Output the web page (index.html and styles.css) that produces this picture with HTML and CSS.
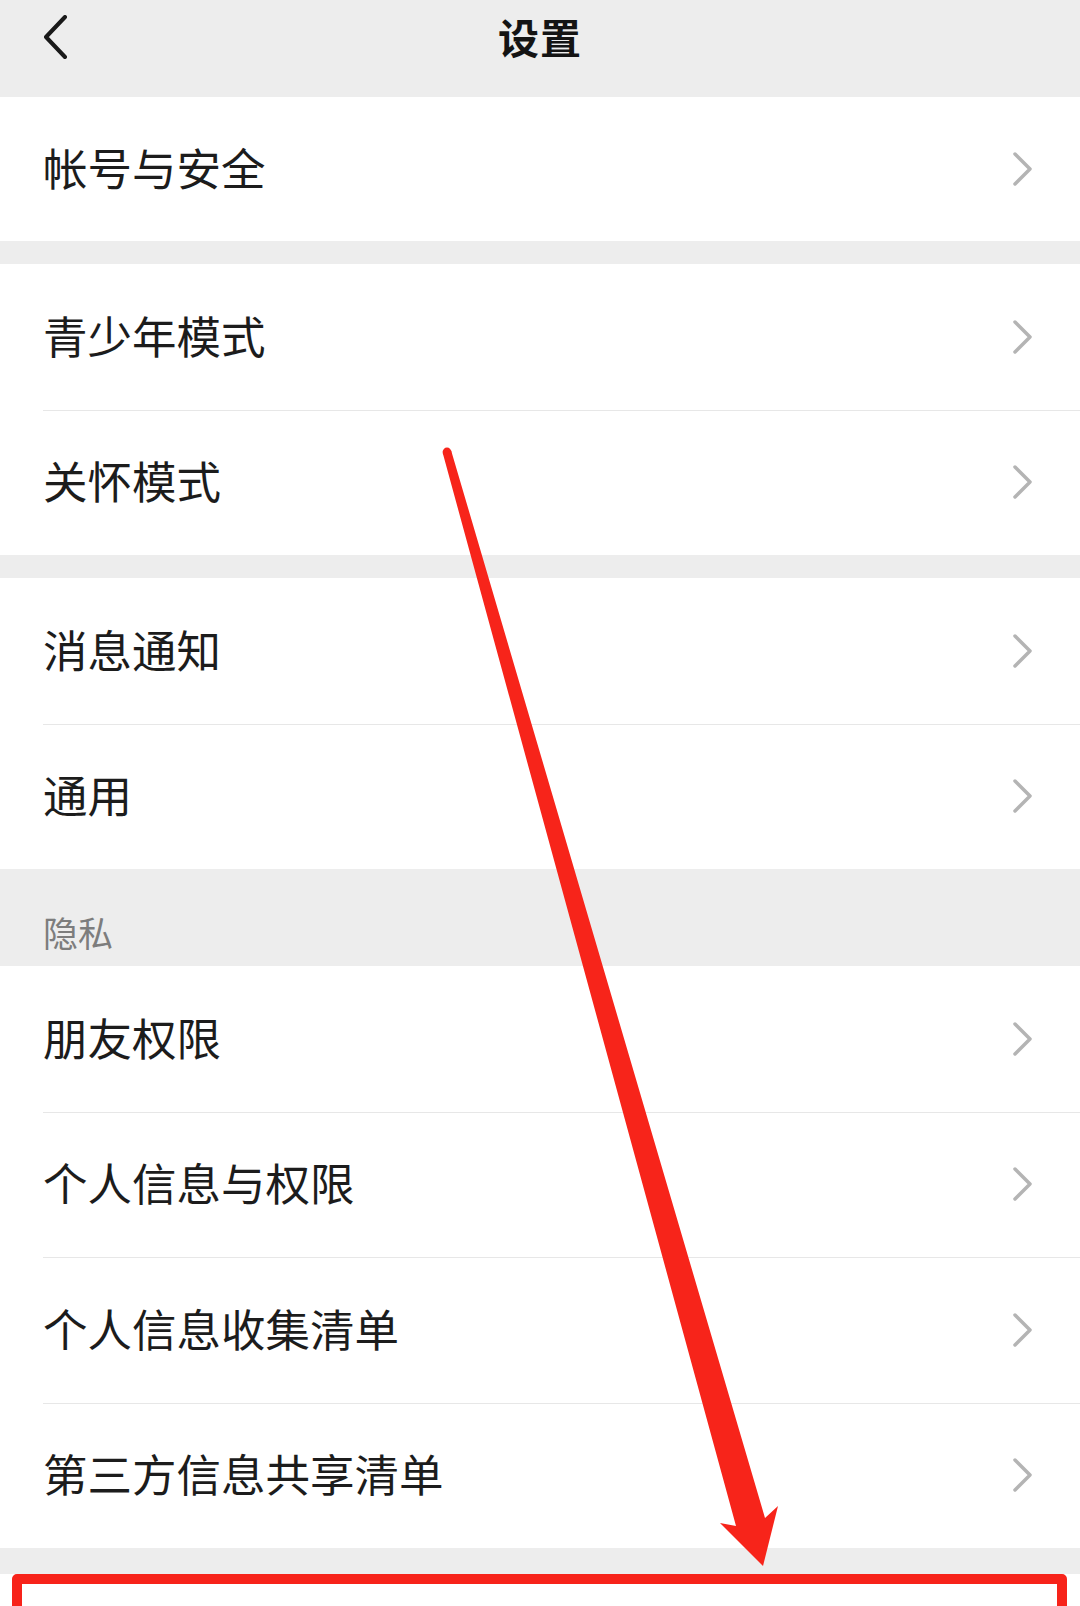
FILE: index.html
```html
<!DOCTYPE html>
<html lang="zh-CN">
<head>
<meta charset="utf-8">
<title>设置</title>
<link rel="stylesheet" href="styles.css">
</head>
<body>
<div class="page">
  <header class="topbar">
    <div class="back">
      <svg width="26" height="44" viewBox="0 0 26 44"><polyline points="22,2 3,22 22,42" fill="none" stroke="#191919" stroke-width="4" stroke-linecap="round" stroke-linejoin="round"/></svg>
    </div>
    <h1 class="title">设置</h1>
    <div></div>
  </header>

  <section class="group">
    <div class="row row-first"><span class="label">帐号与安全</span><svg class="chev" width="22" height="36" viewBox="0 0 22 36"><polyline points="3,3 18,18 3,33" fill="none" stroke="#b4b4b4" stroke-width="3.5" stroke-linecap="round" stroke-linejoin="round"/></svg></div>
  </section>

  <section class="group">
    <div class="row"><span class="label">青少年模式</span><svg class="chev" width="22" height="36" viewBox="0 0 22 36"><polyline points="3,3 18,18 3,33" fill="none" stroke="#b4b4b4" stroke-width="3.5" stroke-linecap="round" stroke-linejoin="round"/></svg></div>
    <div class="row sep"><span class="label">关怀模式</span><svg class="chev" width="22" height="36" viewBox="0 0 22 36"><polyline points="3,3 18,18 3,33" fill="none" stroke="#b4b4b4" stroke-width="3.5" stroke-linecap="round" stroke-linejoin="round"/></svg></div>
  </section>

  <section class="group">
    <div class="row"><span class="label">消息通知</span><svg class="chev" width="22" height="36" viewBox="0 0 22 36"><polyline points="3,3 18,18 3,33" fill="none" stroke="#b4b4b4" stroke-width="3.5" stroke-linecap="round" stroke-linejoin="round"/></svg></div>
    <div class="row sep"><span class="label">通用</span><svg class="chev" width="22" height="36" viewBox="0 0 22 36"><polyline points="3,3 18,18 3,33" fill="none" stroke="#b4b4b4" stroke-width="3.5" stroke-linecap="round" stroke-linejoin="round"/></svg></div>
  </section>

  <div class="section-title">隐私</div>
  <section class="group group-tight">
    <div class="row"><span class="label">朋友权限</span><svg class="chev" width="22" height="36" viewBox="0 0 22 36"><polyline points="3,3 18,18 3,33" fill="none" stroke="#b4b4b4" stroke-width="3.5" stroke-linecap="round" stroke-linejoin="round"/></svg></div>
    <div class="row sep"><span class="label">个人信息与权限</span><svg class="chev" width="22" height="36" viewBox="0 0 22 36"><polyline points="3,3 18,18 3,33" fill="none" stroke="#b4b4b4" stroke-width="3.5" stroke-linecap="round" stroke-linejoin="round"/></svg></div>
    <div class="row sep"><span class="label">个人信息收集清单</span><svg class="chev" width="22" height="36" viewBox="0 0 22 36"><polyline points="3,3 18,18 3,33" fill="none" stroke="#b4b4b4" stroke-width="3.5" stroke-linecap="round" stroke-linejoin="round"/></svg></div>
    <div class="row sep"><span class="label">第三方信息共享清单</span><svg class="chev" width="22" height="36" viewBox="0 0 22 36"><polyline points="3,3 18,18 3,33" fill="none" stroke="#b4b4b4" stroke-width="3.5" stroke-linecap="round" stroke-linejoin="round"/></svg></div>
  </section>

  <section class="group group-last">
    <div class="highlight"></div>
  </section>

  <svg class="arrow" width="1080" height="1606" viewBox="0 0 1080 1606">
    <circle cx="447" cy="452" r="4.4" fill="#f7241a"/>
    <polygon fill="#f7241a" points="442.8,453.3 451.2,450.7 765,1518 778,1506 763,1566 720,1523 736,1526"/>
  </svg>
</div>
</body>
</html>
```
FILE: styles.css
```css
html, body {
  margin: 0;
  padding: 0;
  background: #ededed;
}
.page {
  position: relative;
  width: 1080px;
  height: 1606px;
  overflow: hidden;
  background: #ededed;
  font-family: "Noto Sans CJK SC", "Noto Sans", sans-serif;
  color: #1a1a1a;
}
.topbar {
  height: 97px;
  box-sizing: border-box;
  display: grid;
  grid-template-columns: 1fr auto 1fr;
  align-items: start;
  padding-top: 12px;
  background: #ededed;
}
.back {
  padding: 3px 0 0 43px;
  line-height: 0;
}
.title {
  margin: 0;
  font-size: 41px;
  font-weight: 700;
  line-height: 48px;
  color: #141414;
  letter-spacing: 1px;
}
.group {
  background: #fff;
  margin-bottom: 23px;
}
.group-tight {
  margin-bottom: 26px;
}
.row {
  height: 145.5px;
  box-sizing: border-box;
  display: flex;
  align-items: center;
  justify-content: space-between;
  padding: 0 46px 4px 43px;
}
.row-first {
  height: 144px;
}
.sep {
  position: relative;
}
.sep::before {
  content: "";
  position: absolute;
  top: 0;
  left: 43px;
  right: 0;
  border-top: 1.5px solid #e7e7e7;
}
.label {
  font-size: 44.5px;
  line-height: 1;
  color: #1c1c1c;
}
.chev {
  display: block;
  margin-top: 4px;
}
.section-title {
  height: 97px;
  box-sizing: border-box;
  display: flex;
  align-items: flex-end;
  padding: 0 0 15px 43px;
  font-size: 35px;
  line-height: 38px;
  color: #7d7d7d;
  margin-top: -23px;
}
.group-last {
  height: 200px;
  margin: 0;
  position: relative;
}
.highlight {
  position: absolute;
  top: 0;
  left: 12px;
  width: 1055px;
  height: 120px;
  box-sizing: border-box;
  border: 10px solid #f7231a;
  border-radius: 5px;
}
.arrow {
  position: absolute;
  top: 0;
  left: 0;
  pointer-events: none;
}
```
